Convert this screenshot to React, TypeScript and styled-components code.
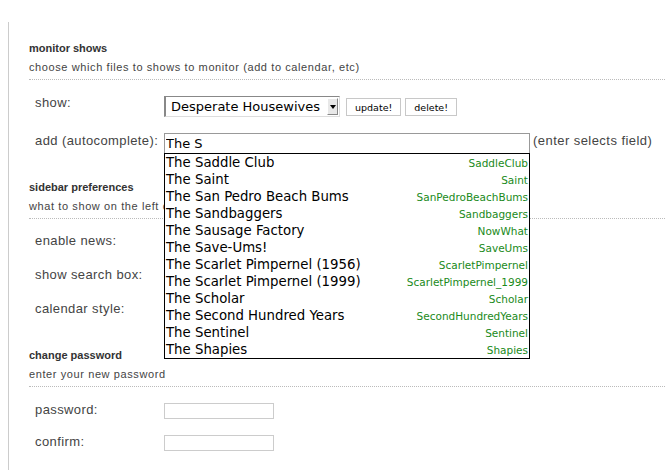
import React from "react";
import styled, { createGlobalStyle } from "styled-components";

const Global = createGlobalStyle`
  html, body { margin: 0; padding: 0; background: #fff; }
  body { font-family: "Liberation Sans", Arial, sans-serif; color: #444; }
`;

const Page = styled.div`
  margin: 22px 0 0 8px;
  min-height: 448px;
  border-left: 1px solid #ccc;
  padding: 19px 0 0 20px;
  box-sizing: border-box;
`;

const Section = styled.section`
  display: flex;
  flex-direction: column;
`;

const Title = styled.h3`
  margin: 0;
  font-size: 11px;
  line-height: 14px;
  font-weight: bold;
  color: #333;
`;

const Desc = styled.p`
  margin: 5px 0 0;
  font-size: 11px;
  line-height: 14px;
  letter-spacing: 0.6px;
  padding-bottom: 5px;
  border-bottom: 1px dotted #bbb;
  white-space: nowrap;
`;

const Rows = styled.div<{ $pt: number; $pb: number; $gap: number }>`
  display: flex;
  flex-direction: column;
  gap: ${(p) => p.$gap}px;
  padding: ${(p) => p.$pt}px 0 ${(p) => p.$pb}px 6px;
`;

const Row = styled.div<{ $h?: number }>`
  display: flex;
  align-items: flex-start;
  min-height: ${(p) => p.$h ?? 16}px;
`;

const Label = styled.label`
  width: 129px;
  flex: none;
  font-size: 13px;
  line-height: 16px;
  letter-spacing: 0.4px;
  color: #444;
`;

const SelectBox = styled.div`
  margin-top: 1px;
  width: 176px;
  height: 21px;
  box-sizing: border-box;
  display: flex;
  align-items: center;
  justify-content: space-between;
  border-top: 1px solid #888;
  border-left: 2px solid #888;
  border-right: 1px solid #ddd;
  border-bottom: 1px solid #ddd;
  padding: 0 1px 0 5px;
  font-family: "DejaVu Sans", Verdana, sans-serif;
  font-size: 13px;
  color: #000;
  background: #fff;
`;

const Arrow = styled.span`
  width: 11px;
  height: 17px;
  box-sizing: border-box;
  background: #e8e8e8;
  border: 1px solid #fff;
  border-right-color: #888;
  border-bottom-color: #888;
  display: flex;
  align-items: center;
  justify-content: center;
  &::after {
    content: "";
    border-left: 3px solid transparent;
    border-right: 3px solid transparent;
    border-top: 4px solid #000;
  }
`;

const Button = styled.button`
  margin: 3px 0 0 6px;
  height: 18px;
  padding: 0 8px;
  box-sizing: border-box;
  border: 1px solid #c8c8c8;
  background: #fff;
  font-family: "DejaVu Sans", Verdana, sans-serif;
  font-size: 9.5px;
  color: #000;
  cursor: pointer;
  & + & { margin-left: 4px; }
`;

const Auto = styled.div`
  position: relative;
  width: 366px;
`;

const AutoInput = styled.input`
  display: block;
  width: 366px;
  height: 21px;
  box-sizing: border-box;
  border: 1px solid #999;
  padding: 0 1px;
  font-family: "DejaVu Sans", Verdana, sans-serif;
  font-size: 13px;
  color: #000;
  outline: none;
`;

const List = styled.ul`
  position: absolute;
  top: 20px;
  left: 0;
  width: 366px;
  box-sizing: border-box;
  margin: 0;
  padding: 0;
  list-style: none;
  border: 1px solid #000;
  background: #fff;
  z-index: 5;
`;

const Item = styled.li`
  display: flex;
  justify-content: space-between;
  align-items: center;
  height: 17px;
  padding: 0 1px;
  font-family: "DejaVu Sans", Verdana, sans-serif;
  font-size: 13.3px;
  color: #000;
`;

const Key = styled.span`
  font-size: 10.5px;
  color: #1a8a1a;
`;

const Hint = styled.span`
  margin-left: 3px;
  font-size: 13px;
  line-height: 16px;
  letter-spacing: 0.45px;
  color: #444;
`;

const TextInput = styled.input`
  margin-top: 1px;
  width: 110px;
  height: 16px;
  box-sizing: border-box;
  border: 1px solid #ccc;
  padding: 0 2px;
  font-size: 11px;
`;

const Check = styled.input`
  margin: 2px 0 0;
`;

const shows: [string, string][] = [
  ["The Saddle Club", "SaddleClub"],
  ["The Saint", "Saint"],
  ["The San Pedro Beach Bums", "SanPedroBeachBums"],
  ["The Sandbaggers", "Sandbaggers"],
  ["The Sausage Factory", "NowWhat"],
  ["The Save-Ums!", "SaveUms"],
  ["The Scarlet Pimpernel (1956)", "ScarletPimpernel"],
  ["The Scarlet Pimpernel (1999)", "ScarletPimpernel_1999"],
  ["The Scholar", "Scholar"],
  ["The Second Hundred Years", "SecondHundredYears"],
  ["The Sentinel", "Sentinel"],
  ["The Shapies", "Shapies"],
];

export default function App() {
  return (
    <>
      <Global />
      <Page>
        <Section>
          <Title>monitor shows</Title>
          <Desc>choose which files to shows to monitor (add to calendar, etc)</Desc>
          <Rows $pt={15} $pb={26} $gap={16}>
            <Row>
              <Label>show:</Label>
              <SelectBox>
                <span>Desperate Housewives</span>
                <Arrow />
              </SelectBox>
              <Button>update!</Button>
              <Button>delete!</Button>
            </Row>
            <Row>
              <Label>add (autocomplete):</Label>
              <Auto>
                <AutoInput defaultValue="The S" />
                <List>
                  {shows.map(([name, key]) => (
                    <Item key={key}>
                      <span>{name}</span>
                      <Key>{key}</Key>
                    </Item>
                  ))}
                </List>
              </Auto>
              <Hint>(enter selects field)</Hint>
            </Row>
          </Rows>
        </Section>
        <Section>
          <Title>sidebar preferences</Title>
          <Desc>what to show on the left column</Desc>
          <Rows $pt={14} $pb={29} $gap={16}>
            <Row $h={18}>
              <Label>enable news:</Label>
              <Check type="checkbox" />
            </Row>
            <Row $h={18}>
              <Label>show search box:</Label>
              <Check type="checkbox" />
            </Row>
            <Row $h={18}>
              <Label>calendar style:</Label>
              <Check type="checkbox" />
            </Row>
          </Rows>
        </Section>
        <Section>
          <Title>change password</Title>
          <Desc>enter your new password</Desc>
          <Rows $pt={15} $pb={0} $gap={15}>
            <Row $h={17}>
              <Label>password:</Label>
              <TextInput type="password" />
            </Row>
            <Row $h={17}>
              <Label>confirm:</Label>
              <TextInput type="password" />
            </Row>
          </Rows>
        </Section>
      </Page>
    </>
  );
}
